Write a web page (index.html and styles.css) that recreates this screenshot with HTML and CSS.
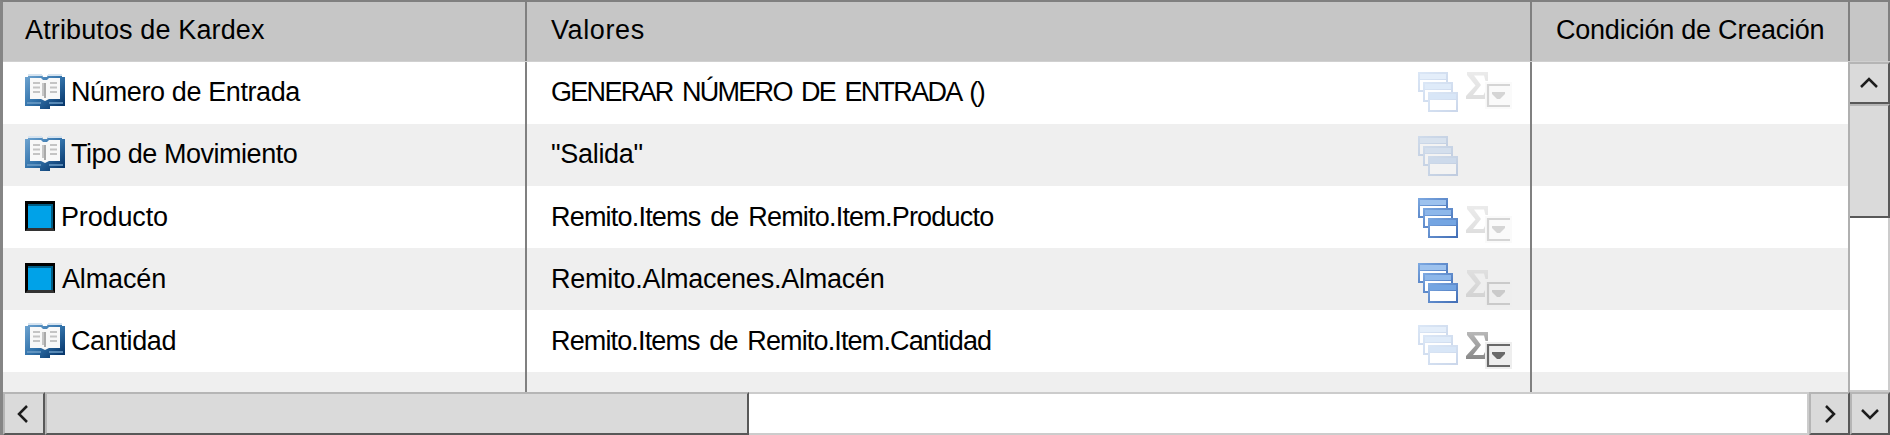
FILE: index.html
```html
<!DOCTYPE html>
<html lang="es">
<head>
<meta charset="utf-8">
<title>Atributos de Kardex</title>
<link rel="stylesheet" href="styles.css">
</head>
<body>
<svg class="defs" width="0" height="0">
  <defs>
    <linearGradient id="cover" x1="0" y1="0" x2="1" y2="1"><stop offset="0" stop-color="#71a6d2"/><stop offset=".5" stop-color="#3272aa"/><stop offset="1" stop-color="#002c60"/></linearGradient>
    <linearGradient id="edge" x1="0" y1="0" x2="1" y2="1"><stop offset="0" stop-color="#7eaae2"/><stop offset="1" stop-color="#416db5"/></linearGradient>
    <linearGradient id="sum" x1="0" y1="0" x2="0" y2="1"><stop offset="0" stop-color="#b8b8b8"/><stop offset="1" stop-color="#8a8a8a"/></linearGradient>
    <symbol id="book" viewBox="0 0 40 35">
      <path d="M0 3H3V1H17L18 3H22L23 1H37V3H40V32H25V35H15V32H0Z" fill="url(#cover)"/>
      <path d="M3 0H17V2H3ZM23 0H37V2H23Z" fill="#d5e3f0"/>
      <path d="M5 4H16L18 6H22L24 4H35V25H24L20 27L16 25H5Z" fill="#f8f8f8"/>
      <path d="M17 9H19V22H17Z" fill="#c6c6c6"/><path d="M19 9H21V24H19Z" fill="#a9a9a9"/>
      <path d="M8 9H15M8 13.500H15M8 18H15M25 9H32M25 13.500H32M25 18H32" stroke="#c4c4c4" stroke-width="1.800"/>
      <path d="M2 29H16M24 29H38" stroke="#6f9fc8" stroke-width="1.500"/>
    </symbol>
    <symbol id="wins" viewBox="0 0 40 40">
      <g><path d="M0 0H30V20H0Z" fill="url(#edge)"/><path d="M2 2H28V7H2Z" fill="#9dc2ee"/><path d="M2 8H28V18H2Z" fill="#fff"/></g>
      <g transform="translate(5 10)"><path d="M0 0H30V20H0Z" fill="url(#edge)"/><path d="M2 2H28V7H2Z" fill="#8db7ea"/><path d="M2 8H28V18H2Z" fill="#fff"/></g>
      <g transform="translate(10 20)"><path d="M0 0H30V20H0Z" fill="url(#edge)"/><path d="M2 2H28V7H2Z" fill="#74a5e2"/><path d="M2 8H28V18H2Z" fill="#fff"/></g>
    </symbol>
    <symbol id="sigma" viewBox="0 0 46 38">
      <path d="M1 0H22V9H19.500L18 3.500H8L15 13L7 23H17.500L20 18H22V27H0V24L9.500 13.500L1 3Z" fill="url(#sum)"/>
      <path d="M19 10H46V37H19Z" fill="#eee"/>
      <path d="M44 13H22V34H44" fill="none" stroke="#696969" stroke-width="2.200"/>
      <path d="M26 20H39V22L34 27H31L26 22Z" fill="#696969"/>
    </symbol>
  </defs>
</svg>
<main class="grid">
  <header class="row head">
    <div class="cell attr"><span class="t1">Atributos de Kardex</span></div>
    <div class="cell value"><span class="t2">Valores</span></div>
    <div class="cell cond"><span class="t3">Condición de Creación</span></div>
    <div class="corner"></div>
  </header>
  <div class="middle">
    <div class="rows">
      <div class="row"><div class="cell attr"><svg class="book"><use href="#book"/></svg><span class="t4">Número de Entrada</span></div><div class="cell value"><span class="t5">GENERAR NÚMERO DE ENTRADA ()</span><div class="actions a1"><svg class="wins off"><use href="#wins"/></svg><svg class="sigma off"><use href="#sigma"/></svg></div></div><div class="cell cond"></div></div>
      <div class="row alt"><div class="cell attr"><svg class="book"><use href="#book"/></svg><span class="t6">Tipo de Movimiento</span></div><div class="cell value"><span class="t7">"Salida"</span><div class="actions a2"><svg class="wins off"><use href="#wins"/></svg></div></div><div class="cell cond"></div></div>
      <div class="row low"><div class="cell attr"><i class="box"></i><span class="t8">Producto</span></div><div class="cell value"><span class="t9">Remito.Items de Remito.Item.Producto</span><div class="actions a3"><svg class="wins"><use href="#wins"/></svg><svg class="sigma off"><use href="#sigma"/></svg></div></div><div class="cell cond"></div></div>
      <div class="row alt low"><div class="cell attr"><i class="box"></i><span class="t10">Almacén</span></div><div class="cell value"><span class="t11">Remito.Almacenes.Almacén</span><div class="actions a4"><svg class="wins"><use href="#wins"/></svg><svg class="sigma off"><use href="#sigma"/></svg></div></div><div class="cell cond"></div></div>
      <div class="row low"><div class="cell attr"><svg class="book"><use href="#book"/></svg><span class="t12">Cantidad</span></div><div class="cell value"><span class="t13">Remito.Items de Remito.Item.Cantidad</span><div class="actions a4"><svg class="wins off"><use href="#wins"/></svg><svg class="sigma"><use href="#sigma"/></svg></div></div><div class="cell cond"></div></div>
      <div class="row alt"><div class="cell attr"></div><div class="cell value"></div><div class="cell cond"></div></div>
    </div>
    <div class="vbar">
      <div class="btn up"><svg width="18" height="12" viewBox="0 0 18 12"><path d="M1 10L9 2L17 10"/></svg></div>
      <div class="vthumb"></div>
      <div class="vtrack"></div>
    </div>
  </div>
  <footer class="bottom">
    <div class="btn left"><svg width="12" height="18" viewBox="0 0 12 18"><path d="M10 1L2 9L10 17"/></svg></div>
    <div class="hthumb"></div>
    <div class="htrack"></div>
    <div class="btn right"><svg width="12" height="18" viewBox="0 0 12 18"><path d="M2 1L10 9L2 17"/></svg></div>
    <div class="btn down"><svg width="18" height="12" viewBox="0 0 18 12"><path d="M1 2L9 10L17 2"/></svg></div>
  </footer>
</main>
</body>
</html>
```
FILE: styles.css
```css
* { box-sizing: border-box; }
body { margin: 0; overflow: hidden; background: #fff; color: #000; font: 27px/32px "Liberation Sans", Arial, sans-serif; }
.defs { position: absolute; }
.grid { width: 1890px; height: 435px; display: flex; flex-direction: column; border-top: 2px solid #808080; border-left: 3px solid #858585; }
.row { display: flex; height: 62px; flex: none; background: #fff; }
.row.alt { background: #efefef; }
.row.head { height: 60px; background: #c6c6c6; border-bottom: 1px solid #d0d0d0; }
.cell { display: flex; flex: none; align-items: flex-start; padding-top: 14px; white-space: nowrap; border-right: 2px solid #808080; }
.low .cell { padding-top: 15px; }
.head .cell { padding-top: 12px; }
.attr { width: 524px; padding-left: 22px; }
.value { width: 1005px; padding-left: 24px; }
.cond { width: 316px; padding-left: 24px; border-right: 0; }
.head .cond { width: 318px; border-right: 2px solid #808080; }
.corner { flex: 1; border-right: 2px solid #808080; }
.t1 { letter-spacing: .13px; }
.t2 { letter-spacing: .6px; }
.t3 { letter-spacing: -.23px; }
.t4 { letter-spacing: -.39px; }
.t5 { letter-spacing: -1.7px; word-spacing: 3.5px; }
.t6 { letter-spacing: -.46px; }
.t7 { letter-spacing: -.3px; }
.t8 { letter-spacing: -.15px; }
.t9 { letter-spacing: -.8px; word-spacing: 3px; }
.t10 { letter-spacing: -.15px; margin-left: 1px; }
.t11 { letter-spacing: -.23px; }
.t12 { letter-spacing: -.38px; }
.t13 { letter-spacing: -.86px; word-spacing: 3px; }
.middle { display: flex; height: 330px; overflow: hidden; }
.rows { width: 1845px; height: 330px; overflow: hidden; }
.book { width: 40px; height: 35px; margin-right: 6px; flex: none; margin-top: -2px; }
.box { width: 30px; height: 30px; margin: 0 6px 0 0; flex: none; background: #00a2e8; border: 3px solid #000; border-right-width: 2px; border-bottom-color: #333; box-shadow: inset -2px 2px #005d85; }
.actions { display: flex; align-items: flex-start; gap: 8px; width: 112px; margin-left: auto; margin-top: -14px; padding-top: 10px; }
.low .actions { margin-top: -15px; }
.wins { width: 40px; height: 40px; flex: none; }
.sigma { width: 46px; height: 38px; flex: none; }
.off { opacity: .27; }
.actions.a2, .actions.a3 { padding-top: 12px; }
.actions.a4 { padding-top: 15px; }
.a3 .sigma { margin-top: 8px; }
.a4 .sigma { margin-top: 7px; }
.vbar { width: 42px; display: flex; flex-direction: column; border-left: 2px solid #b0b0b0; }
.btn { display: flex; align-items: center; justify-content: center; background: #dadada; border: 2px solid #b5b5b5; flex: none; }
.btn path { fill: none; stroke: #1c1c1c; stroke-width: 2.5; }
.up { height: 42px; border-left: 0; border-right-color: #585858; border-bottom-color: #585858; }
.vthumb { height: 114px; background: #dadada; border-top: 2px solid #b5b5b5; border-right: 2px solid #585858; border-bottom: 2px solid #585858; }
.vtrack { flex: 1; border-right: 2px solid #ccc; border-bottom: 2px solid #ccc; }
.bottom { display: flex; height: 43px; }
.left { width: 42px; border-right-color: #585858; border-bottom-color: #585858; }
.left svg { margin-right: 3px; }
.hthumb { width: 704px; background: #dadada; border: 2px solid #b5b5b5; border-right-color: #585858; border-bottom-color: #585858; }
.htrack { flex: 1; border: 2px solid #ccc; border-left: 0; }
.right, .down { width: 41px; border-right-color: #585858; border-bottom-color: #585858; }
.down { width: 40px; }
```
